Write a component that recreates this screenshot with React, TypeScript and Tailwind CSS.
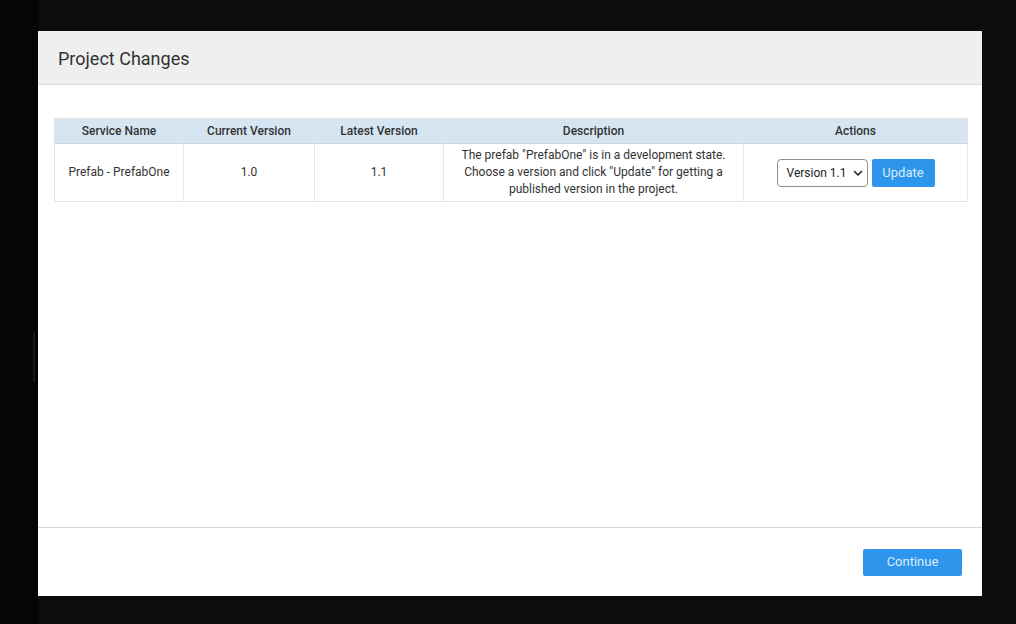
import React from "react";

export default function App() {
  const font = { fontFamily: "Roboto, 'Liberation Sans', sans-serif" };
  return (
    <div className="flex h-[624px] w-full bg-[#0c0c0c]" style={font}>
      <div className="relative w-[38px] shrink-0 bg-[#050505]">
        <div className="absolute left-[33px] top-[333px] h-[49px] w-[2px] bg-[#1a1a1a]" />
      </div>
      <div className="mt-[31px] flex h-[565px] w-[944px] flex-col bg-white">
        <div className="flex h-[54px] shrink-0 items-center border-b border-[#dcdcdc] bg-[#efefef] px-5 pt-[2px]">
          <h1 className="text-[18px] text-[#333]">Project Changes</h1>
        </div>
        <div className="flex-1 pl-4 pr-[15px] pt-[33px]">
          <table className="w-[913px] table-fixed border-collapse text-[12px] text-[#333]">
            <colgroup>
              <col className="w-[129px]" />
              <col className="w-[131px]" />
              <col className="w-[129px]" />
              <col className="w-[300px]" />
              <col className="w-[224px]" />
            </colgroup>
            <thead>
              <tr className="h-[25px] bg-[#d5e5f2]">
                {["Service Name", "Current Version", "Latest Version", "Description", "Actions"].map((h) => (
                  <th key={h} className="border border-[#e4e4e4] border-b-[#c7d6e2] font-medium text-center">
                    {h}
                  </th>
                ))}
              </tr>
            </thead>
            <tbody>
              <tr className="h-[58px]">
                <td className="border border-[#e6e6e6] pb-[2px] text-center">Prefab - PrefabOne</td>
                <td className="border border-[#e6e6e6] pb-[2px] text-center">1.0</td>
                <td className="border border-[#e6e6e6] pb-[2px] text-center">1.1</td>
                <td className="border border-[#e6e6e6] px-2 text-center leading-[17px]">
                  The prefab "PrefabOne" is in a development state. Choose a version and click "Update" for getting a published version in the project.
                </td>
                <td className="border border-[#e6e6e6]">
                  <div className="flex items-center justify-center gap-[4px]">
                    <div className="flex h-[28px] w-[91px] items-center justify-between rounded-[4px] border border-[#8f8f8f] pl-[9px] pr-[3px] text-[12px] text-[#222]">
                      <span>Version 1.1</span>
                      <svg width="12" height="12" viewBox="0 0 12 12" fill="none">
                        <path d="M2.5 4.5 L6 8 L9.5 4.5" stroke="#222" strokeWidth="1.6" strokeLinecap="round" strokeLinejoin="round" />
                      </svg>
                    </div>
                    <button className="h-[28px] w-[63px] rounded-[2px] bg-[#2e95ec] text-[13px] text-[#dcecfb]">Update</button>
                  </div>
                </td>
              </tr>
            </tbody>
          </table>
        </div>
        <div className="flex h-[69px] shrink-0 items-center justify-end border-t border-[#d4d4d4] pr-5">
          <button className="h-[27px] w-[99px] rounded-[2px] bg-[#2e95ec] text-[13px] text-[#dcecfb]">Continue</button>
        </div>
      </div>
    </div>
  );
}
